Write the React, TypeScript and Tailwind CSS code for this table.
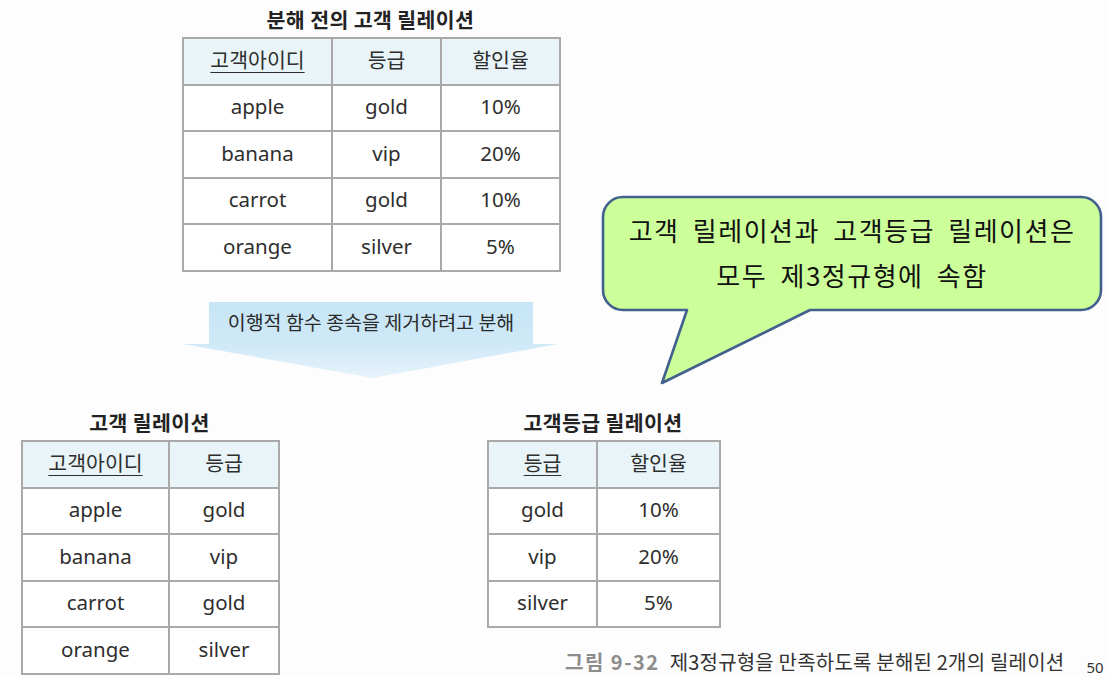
import React from "react";

const KR = "font-['Noto_Sans_CJK_KR','Noto_Sans',sans-serif]";
const LAT = "font-['Noto_Sans','Noto_Sans_CJK_KR',sans-serif]";

type TableProps = {
  title: string;
  widthClass: string;
  colClasses: string[];
  headers: { text: string; key?: boolean }[];
  rows: string[][];
};

function RelTable({ title, widthClass, colClasses, headers, rows }: TableProps) {
  return (
    <div className={`flex flex-col ${widthClass}`}>
      <div className={`${KR} h-[28px] leading-[28px] text-center text-[20.5px] font-semibold text-[#222] tracking-[0.4px] mb-[4px]`}>
        {title}
      </div>
      <table className={`border-collapse table-fixed ${widthClass} bg-white`}>
        <colgroup>
          {colClasses.map((c, i) => (
            <col key={i} className={c} />
          ))}
        </colgroup>
        <thead>
          <tr className="h-[46.6px] bg-[#e8f4f7]">
            {headers.map((h, i) => (
              <th
                key={i}
                className={`${KR} border-2 border-[#a9a9a9] p-0 pb-[4px] text-center align-middle text-[20.5px] font-normal text-[#2e2e2e] ${
                  h.key ? "underline underline-offset-[4px] decoration-1" : ""
                }`}
              >
                {h.text}
              </th>
            ))}
          </tr>
        </thead>
        <tbody>
          {rows.map((r, i) => (
            <tr key={i} className="h-[46.6px]">
              {r.map((c, j) => (
                <td
                  key={j}
                  className={`${LAT} border-2 border-[#a9a9a9] p-0 pb-[3px] text-center align-middle text-[20.5px] text-[#2e2e2e]`}
                >
                  {c}
                </td>
              ))}
            </tr>
          ))}
        </tbody>
      </table>
    </div>
  );
}

function DownArrow() {
  return (
    <div className="relative w-[375px] h-[76px] ml-[183px] mt-[30px]">
      <svg width="375" height="76" viewBox="0 0 375 76" className="block">
        <defs>
          <linearGradient id="ag" x1="0" y1="0" x2="0" y2="1">
            <stop offset="0" stopColor="#c6e5f6" />
            <stop offset="0.55" stopColor="#cfe9f7" />
            <stop offset="1" stopColor="#e6f3fb" />
          </linearGradient>
        </defs>
        <path d="M26 0 H350 V42 H375 L190 76 L0 42 H26 Z" fill="url(#ag)" />
      </svg>
      <div
        className={`${KR} absolute left-[26px] top-0 w-[324px] h-[42px] pb-[2px] flex items-center justify-center text-[19.5px] text-[#2a2a2a]`}
      >
        이행적 함수 종속을 제거하려고 분해
      </div>
    </div>
  );
}

function Bubble() {
  return (
    <div className="absolute left-[600px] top-[194px] w-[506px] h-[194px]">
      <svg width="506" height="194" viewBox="0 0 506 194" className="absolute left-0 top-0">
        <path
          d="M23 3 H481 A20 20 0 0 1 501 23 V96 A20 20 0 0 1 481 116 H210 L62 189 L87 116 H23 A20 20 0 0 1 3 96 V23 A20 20 0 0 1 23 3 Z"
          fill="#ccff99"
          stroke="#41608e"
          strokeWidth="2.6"
          strokeLinejoin="round"
        />
      </svg>
      <div
        className={`${KR} absolute left-[3px] top-[3px] w-[498px] h-[113px] pb-[3px] flex flex-col items-center justify-center text-[26px] leading-[45px] text-[#111] tracking-[1.5px] [word-spacing:6px] whitespace-nowrap`}
      >
        <div>고객 릴레이션과 고객등급 릴레이션은</div>
        <div>모두 제3정규형에 속함</div>
      </div>
    </div>
  );
}

export default function App() {
  return (
    <div className="relative w-[1110px] h-[676px] overflow-hidden bg-[#fdfdfd]">
      <div className="pt-[5px] pl-[182px]">
        <RelTable
          title="분해 전의 고객 릴레이션"
          widthClass="w-[377px]"
          colClasses={["w-[149px]", "w-[109px]", "w-[119px]"]}
          headers={[{ text: "고객아이디", key: true }, { text: "등급" }, { text: "할인율" }]}
          rows={[
            ["apple", "gold", "10%"],
            ["banana", "vip", "20%"],
            ["carrot", "gold", "10%"],
            ["orange", "silver", "5%"],
          ]}
        />
      </div>

      <DownArrow />

      <div className="flex mt-[30px] pl-[21px] gap-[209px]">
        <RelTable
          title="고객 릴레이션"
          widthClass="w-[257px]"
          colClasses={["w-[147px]", "w-[110px]"]}
          headers={[{ text: "고객아이디", key: true }, { text: "등급" }]}
          rows={[
            ["apple", "gold"],
            ["banana", "vip"],
            ["carrot", "gold"],
            ["orange", "silver"],
          ]}
        />
        <div className="flex flex-col">
          <RelTable
            title="고객등급 릴레이션"
            widthClass="w-[232px]"
            colClasses={["w-[109px]", "w-[123px]"]}
            headers={[{ text: "등급", key: true }, { text: "할인율" }]}
            rows={[
              ["gold", "10%"],
              ["vip", "20%"],
              ["silver", "5%"],
            ]}
          />
          <div className="flex items-start ml-[78px] mt-[22px] whitespace-nowrap">
            <span className={`${KR} text-[20px] leading-[24px] font-bold text-[#8c8c8c] tracking-[1.5px]`}>
              그림 9-32
            </span>
            <span className={`${KR} ml-[10px] text-[20px] leading-[24px] text-[#333] tracking-[0.2px]`}>
              제3정규형을 만족하도록 분해된 2개의 릴레이션
            </span>
            <span className={`${LAT} ml-[22px] mt-[8px] text-[15px] leading-[18px] text-[#333]`}>50</span>
          </div>
        </div>
      </div>

      <Bubble />
    </div>
  );
}
